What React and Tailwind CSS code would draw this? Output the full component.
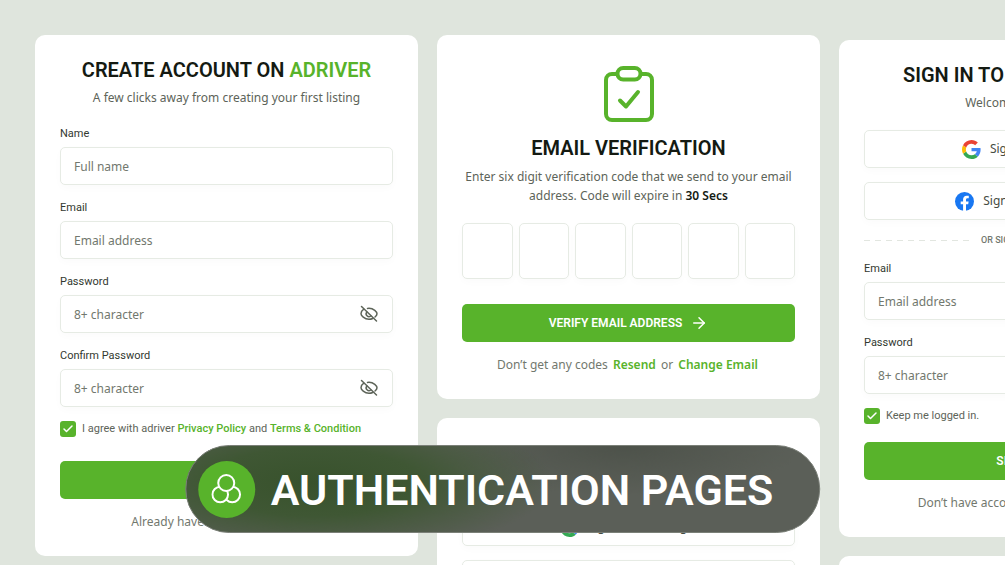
import { ArrowRight, Check } from 'lucide-react';

const EyeOffIcon = () => (
  <svg viewBox="0 0 20 20" className="size-5" fill="none" stroke="currentColor" strokeWidth="1.5" strokeLinecap="round" strokeLinejoin="round">
    <path d="M2.500 2.500 17.500 17" />
    <path d="M4.800 5.200C3 6.500 2 8.300 2 9.700c0 1.800 3.300 5.600 8 5.600 1.400 0 2.600-.3 3.700-.8" />
    <path d="M8.500 4.400c.5-.1 1-.1 1.500-.1 4.700 0 8 3.800 8 5.500 0 .9-.8 2.200-2 3.200" />
    <path d="M7.900 8a2.800 2.800 0 0 0 3.900 4" />
  </svg>
);

const ClipboardIcon = () => (
  <svg viewBox="0 0 50 56" className="w-[50px] h-14" fill="none" stroke="#58b32b" strokeWidth="4" strokeLinecap="round" strokeLinejoin="round">
    <path d="M13 8H8a6 6 0 0 0-6 6v34a6 6 0 0 0 6 6h34a6 6 0 0 0 6-6V14a6 6 0 0 0-6-6h-5" />
    <rect x="13.500" y="2" width="23" height="11.500" rx="5.700" />
    <path d="M16 34.500 22 40.500 34 26" />
  </svg>
);

const CirclesIcon = () => (
  <svg viewBox="0 0 30 30" className="size-[30px]" fill="#58b32b" stroke="white" strokeWidth="2">
    <circle cx="21" cy="20.500" r="7.800" />
    <circle cx="9" cy="20.500" r="7.800" />
    <circle cx="15" cy="9" r="8" />
  </svg>
);

const GoogleIcon = () => (
  <svg viewBox="0 0 24 24" className="size-[19px]">
    <path fill="#4285f4" d="M23.500 12.300c0-.9-.1-1.500-.2-2.200H12v4.100h6.600c-.1 1.100-.9 2.700-2.500 3.800l3.800 3c2.300-2.100 3.600-5.200 3.600-8.700z" />
    <path fill="#34a853" d="M12 24c3.200 0 5.900-1.100 7.900-2.900l-3.800-3c-1 .7-2.400 1.200-4.100 1.200-3.100 0-5.800-2.100-6.700-4.900l-3.900 3C3.300 21.300 7.300 24 12 24z" />
    <path fill="#fbbc05" d="M5.300 14.400c-.3-.7-.4-1.500-.4-2.400s.2-1.700.4-2.400l-4-3.100C.5 8.200 0 10 0 12s.5 3.800 1.300 5.500z" />
    <path fill="#ea4335" d="M12 4.700c2.200 0 3.700 1 4.600 1.800L20 3.200C17.900 1.200 15.200 0 12 0 7.300 0 3.300 2.700 1.300 6.600l4 3C6.200 6.800 8.900 4.700 12 4.700z" />
  </svg>
);

const FacebookIcon = () => (
  <svg viewBox="0 0 24 24" className="size-[19px]">
    <circle cx="12" cy="12" r="12" fill="#1877f2" />
    <path fill="white" d="M16.700 15.500 17.200 12h-3.300V9.700c0-1 .5-1.900 2-1.900h1.500v-3s-1.400-.2-2.700-.2c-2.700 0-4.500 1.700-4.500 4.700V12h-3v3.500h3V24h3.700v-8.500z" />
  </svg>
);

const Card = ({ children }) => (
  <section className="bg-white rounded-[10px] px-[25px] pt-5 pb-6">{children}</section>
);

const Title = ({ children }) => (
  <h2 className="font-['Roboto',sans-serif] text-[20px] leading-[30px] font-semibold text-[#141a12]">{children}</h2>
);

const Field = ({ id, label, placeholder, type = 'text' }) => (
  <div>
    <label htmlFor={id} className="block pt-px font-['Roboto',sans-serif] text-[11px] leading-4 text-[#32382f]">{label}</label>
    <div className="relative mt-[5px]">
      <input
        id={id}
        type={type}
        placeholder={placeholder}
        className="block w-full h-[38px] rounded-[5px] border border-[#e6ebe4] bg-white px-[13px] text-[12px] text-[#32382f] placeholder:text-[#72786e] shadow-[0_3px_8px_rgba(0,0,0,0.02)] outline-none"
      />
      {type === 'password' && (
        <button type="button" aria-label="Show password" className="absolute right-3.5 top-[9px] text-[#5d6459]">
          <EyeOffIcon />
        </button>
      )}
    </div>
  </div>
);

const Checkbox = ({ id, children }) => (
  <div className="mt-3.5 flex items-center gap-1.5">
    <span className="grid size-4 place-items-center">
      <input id={id} type="checkbox" defaultChecked className="col-start-1 row-start-1 size-4 appearance-none rounded-[3px] bg-[#58b32b]" />
      <Check className="pointer-events-none col-start-1 row-start-1 size-3 text-white" strokeWidth={3} />
    </span>
    <label htmlFor={id} className="font-['Roboto',sans-serif] text-[11px] leading-4 text-[#5d6459]">{children}</label>
  </div>
);

const SubmitButton = ({ children }) => (
  <button type="submit" className="flex w-full h-[38px] items-center justify-center gap-2 rounded-[5px] bg-[#58b32b] font-['Roboto',sans-serif] text-[12px] font-semibold text-white">
    {children}
    <ArrowRight className="size-[18px]" strokeWidth={2} />
  </button>
);

const SocialButton = ({ icon, children }) => (
  <button type="button" className="flex w-full h-[38px] items-center justify-center gap-[9px] rounded-[5px] border border-[#e6ebe4] text-[12px] text-[#464c43] shadow-[0_3px_8px_rgba(0,0,0,0.02)]">
    {icon}
    {children}
  </button>
);

const GreenLink = ({ children }) => <a href="#" className="font-medium text-[#58b32b]">{children}</a>;

const FootLink = ({ children }) => <a href="#" className="mx-0.5 font-semibold text-[#58b32b]">{children}</a>;

const Footnote = ({ children }) => (
  <p className="mt-[13px] text-center text-[12px] leading-5 text-[#72786e]">{children}</p>
);

const DashedLine = () => (
  <span className="h-px flex-1 bg-[repeating-linear-gradient(90deg,#e2e6e0_0_6px,transparent_6px_11px)]" />
);

const CreateAccount = () => (
  <Card>
    <header className="text-center">
      <Title>CREATE ACCOUNT ON <span className="text-[#58b32b]">ADRIVER</span></Title>
      <p className="mt-[3px] text-[12px] leading-5 text-[#5d6459]">A few clicks away from creating your first listing</p>
    </header>
    <form className="mt-[17px]">
      <div className="flex flex-col gap-3.5">
        <Field id="name" label="Name" placeholder="Full name" />
        <Field id="email" label="Email" placeholder="Email address" type="email" />
        <Field id="password" label="Password" placeholder="8+ character" type="password" />
        <Field id="confirm" label="Confirm Password" placeholder="8+ character" type="password" />
      </div>
      <Checkbox id="terms">
        I agree with adriver <GreenLink>Privacy Policy</GreenLink> and <GreenLink>Terms &amp; Condition</GreenLink>
      </Checkbox>
      <div className="mt-6">
        <SubmitButton>SIGN UP</SubmitButton>
      </div>
    </form>
    <Footnote>Already have an account? <FootLink>Sign In</FootLink></Footnote>
  </Card>
);

const EmailVerification = () => (
  <Card>
    <div className="flex justify-center pt-[11px] pb-[11px]">
      <ClipboardIcon />
    </div>
    <header className="text-center">
      <Title>EMAIL VERIFICATION</Title>
      <p className="mt-1 text-[12px] leading-[19px] text-[#5d6459]">
        Enter six digit verification code that we send to your email address. Code will expire in <strong className="font-semibold text-[#141a12]">30 Secs</strong>
      </p>
    </header>
    <form className="mt-[18px]">
      <div className="grid grid-cols-6 gap-1.5">
        {[1, 2, 3, 4, 5, 6].map((n) => (
          <input key={n} aria-label={`Digit ${n}`} maxLength={1} className="h-14 w-full rounded-[5px] border border-[#e6ebe4] text-center text-[20px] shadow-[0_3px_8px_rgba(0,0,0,0.02)] outline-none" />
        ))}
      </div>
      <div className="mt-[25px]">
        <SubmitButton>VERIFY EMAIL ADDRESS</SubmitButton>
      </div>
    </form>
    <Footnote>
      Don’t get any codes <FootLink>Resend</FootLink> or <FootLink>Change Email</FootLink>
    </Footnote>
  </Card>
);

const SignIn = ({ id }) => (
  <Card>
    <header className="text-center">
      <Title>SIGN IN TO YOUR ACCOUNT</Title>
      <p className="mt-[3px] text-[12px] leading-5 text-[#5d6459]">Welcome back, adriver!</p>
    </header>
    <div className="mt-[17px] flex flex-col gap-3.5">
      <SocialButton icon={<GoogleIcon />}>Sign in with Google</SocialButton>
      <SocialButton icon={<FacebookIcon />}>Sign in with Facebook</SocialButton>
    </div>
    <div className="my-3 flex items-center gap-3">
      <DashedLine />
      <span className="font-['Roboto',sans-serif] text-[9px] leading-4 font-medium text-[#72786e]">OR SIGN IN WITH EMAIL</span>
      <DashedLine />
    </div>
    <form>
      <div className="flex flex-col gap-3.5">
        <Field id={`${id}-email`} label="Email" placeholder="Email address" type="email" />
        <Field id={`${id}-password`} label="Password" placeholder="8+ character" type="password" />
      </div>
      <Checkbox id={`${id}-keep`}>Keep me logged in.</Checkbox>
      <div className="mt-[18px]">
        <SubmitButton>SIGN IN</SubmitButton>
      </div>
    </form>
    <Footnote>Don’t have account on adriver? <FootLink>Sign Up</FootLink></Footnote>
  </Card>
);

function App() {
  return (
    <div className="relative h-screen overflow-hidden bg-[#dfe5dd] font-['Noto_Sans',sans-serif]">
      <main className="flex items-start gap-[19px] px-[35px] pt-[35px]">
        <div className="w-[383px] shrink-0">
          <CreateAccount />
        </div>
        <div className="flex w-[383px] shrink-0 flex-col gap-[19px]">
          <EmailVerification />
          <SignIn id="welcome" />
        </div>
        <div className="flex w-[383px] shrink-0 flex-col gap-[19px] pt-[5px]">
          <SignIn id="signin" />
          <EmailVerification />
        </div>
      </main>

      <div className="absolute bottom-8 left-1/2 flex h-[88px] -translate-x-1/2 items-center gap-4 rounded-full border border-[#7b8078] bg-[#5b5f58] bg-[radial-gradient(ellipse_240px_75px_at_20%_42%,#38522c_0%,#3f5734_45%,transparent_100%),radial-gradient(ellipse_180px_50px_at_69%_0%,#4d524a_0%,transparent_100%)] pl-3 pr-[46px]">
        <span className="grid size-[57px] shrink-0 place-items-center rounded-full bg-[#58b32b]">
          <CirclesIcon />
        </span>
        <h1 className="whitespace-nowrap pt-0.5 font-['Roboto',sans-serif] text-[43px] font-semibold text-white">AUTHENTICATION PAGES</h1>
      </div>
    </div>
  );
}

export default App;
